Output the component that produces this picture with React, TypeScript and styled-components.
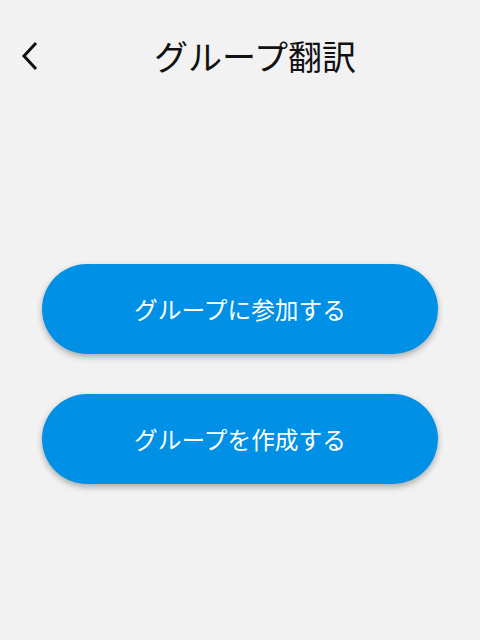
import React from "react";
import styled, { createGlobalStyle } from "styled-components";

const Global = createGlobalStyle`
  html, body { margin: 0; padding: 0; background: #f2f2f2; }
  body { font-family: "Noto Sans CJK JP", "Noto Sans", sans-serif; }
`;

const Page = styled.div`
  width: 480px;
  height: 640px;
  background: #f2f2f2;
  display: flex;
  flex-direction: column;
`;

const Header = styled.header`
  display: flex;
  align-items: center;
  height: 72px;
  margin-top: 20px;
  padding: 0 16px 0 14px;
`;

const BackButton = styled.button`
  width: 32px;
  height: 40px;
  border: none;
  background: none;
  padding: 0;
  display: flex;
  align-items: center;
  justify-content: center;
  color: #111;
  cursor: pointer;
`;

const Title = styled.h1`
  flex: 1;
  margin: 0;
  text-align: center;
  font-size: 34px;
  font-weight: 400;
  color: #111;
  line-height: 40px;
`;

const Actions = styled.div`
  display: flex;
  flex-direction: column;
  gap: 40px;
  padding: 172px 42px 0;
`;

const PillButton = styled.button`
  height: 90px;
  border: none;
  border-radius: 45px;
  background: #0090e6;
  color: #fff;
  font-family: "Noto Sans CJK JP", "Noto Sans", sans-serif;
  font-size: 23.7px;
  font-weight: 400;
  box-shadow: 0 3px 6px rgba(0, 0, 0, 0.3);
  cursor: pointer;
`;

export default function App() {
  return (
    <>
      <Global />
      <Page>
        <Header>
          <BackButton aria-label="戻る">
            <svg width="18" height="30" viewBox="0 0 18 30" fill="none">
              <path d="M15 2 L3 15 L15 28" stroke="currentColor" strokeWidth="3" strokeLinecap="butt" strokeLinejoin="miter" />
            </svg>
          </BackButton>
          <Title>グループ翻訳</Title>
        </Header>
        <Actions>
          <PillButton>グループに参加する</PillButton>
          <PillButton>グループを作成する</PillButton>
        </Actions>
      </Page>
    </>
  );
}
